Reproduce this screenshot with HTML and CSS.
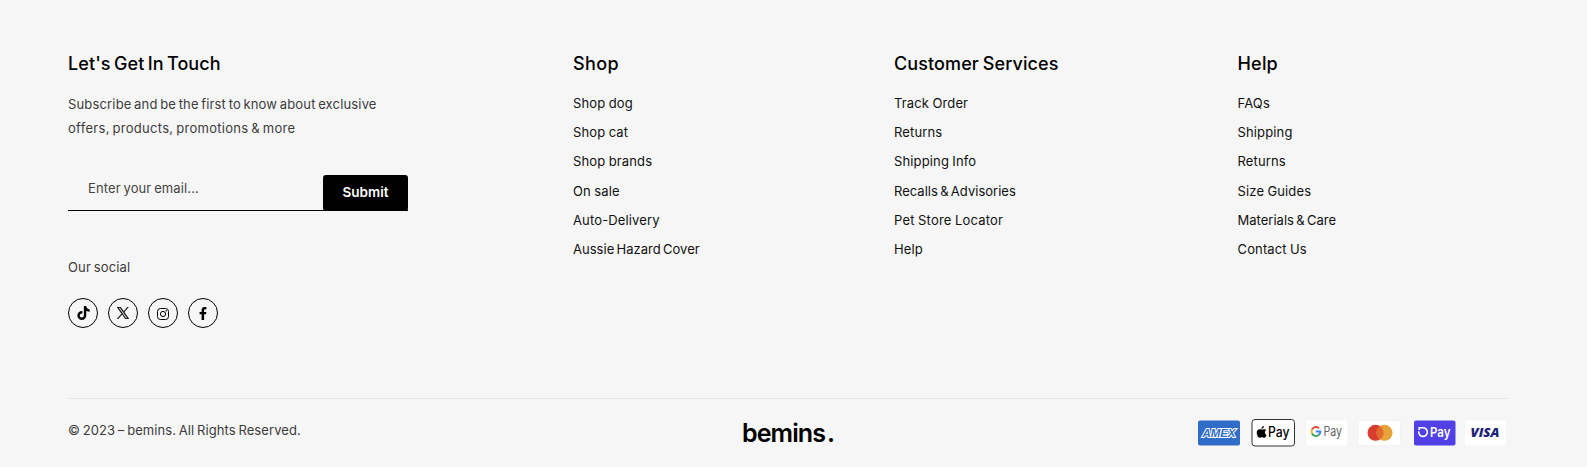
FILE: index.html
```html
<!DOCTYPE html>
<html lang="en">
<head>
<meta charset="utf-8">
<title>bemins.</title>
<link rel="stylesheet" href="styles.css">
</head>
<body>
<footer class="footer">
  <div class="columns">
    <section class="touch">
      <h2 class="title title-touch">Let's Get In Touch</h2>
      <p class="intro"><span class="intro-first">Subscribe and be the first to know about exclusive</span><br><span class="intro-second">offers, products, promotions &amp; more</span></p>
      <form class="subscribe">
        <input class="email" type="email" placeholder="Enter your email..." aria-label="Email">
        <button class="submit" type="button">Submit</button>
      </form>
      <p class="social-label">Our social</p>
      <div class="social">
        <a class="social-link"><svg width="13" height="14" viewBox="0 0 448 512"><path d="M448 209.900a210.100 210.100 0 0 1-122.800-39.300v178.800A162.600 162.600 0 1 1 185 188.300v89.900a74.600 74.600 0 1 0 52.200 71.200V0h88a121.200 121.200 0 0 0 1.900 22.200 122.200 122.200 0 0 0 53.900 80.200 121.400 121.400 0 0 0 67 20.100z"/></svg></a>
        <a class="social-link"><svg width="12" height="12" viewBox="0 0 24 24"><path stroke="#000" stroke-width=".7" d="M14.300 10.200 23.200 0h-2.100l-7.700 8.800L7.200 0H0l9.300 13.400L0 24h2.100l8.200-9.400L16.800 24H24zM11.400 13.300l-.9-1.300L2.900 1.600h3.200l6.100 8.700.9 1.300 8 11.300h-3.200z"/></svg></a>
        <a class="social-link"><svg width="12" height="12" viewBox="0 0 12 12" class="insta"><rect x=".5" y=".5" width="11" height="11" rx="3"/><circle cx="6" cy="6" r="2.600"/><circle cx="9.100" cy="2.900" r=".3"/></svg></a>
        <a class="social-link"><svg width="8" height="13" viewBox="0 0 320 512"><path d="m279 288 14-93h-89v-60c0-25 13-50 53-50h40V7s-37-7-72-7c-73 0-121 44-121 125v70H23v93h81v224h100V288z"/></svg></a>
      </div>
    </section>
    <nav class="shop">
      <h2 class="title title-shop">Shop</h2>
      <ul class="links"><li>Shop dog</li><li>Shop cat</li><li>Shop brands</li><li>On sale</li><li>Auto-Delivery</li><li class="tight">Aussie Hazard Cover</li></ul>
    </nav>
    <nav class="services">
      <h2 class="title title-services">Customer Services</h2>
      <ul class="links"><li>Track Order</li><li>Returns</li><li>Shipping Info</li><li class="tight">Recalls &amp; Advisories</li><li class="wide">Pet Store Locator</li><li>Help</li></ul>
    </nav>
    <nav class="help">
      <h2 class="title title-help">Help</h2>
      <ul class="links"><li>FAQs</li><li>Shipping</li><li>Returns</li><li>Size Guides</li><li class="tight">Materials &amp; Care</li><li>Contact Us</li></ul>
    </nav>
  </div>
  <div class="bottom">
    <p class="copyright">© 2023 – bemins. All Rights Reserved.</p>
    <div class="logo">bemins<span class="logo-dot">.</span></div>
    <svg class="payments" width="310" height="30" viewBox="0 0 310 30">
      <rect x="1" y="2.500" width="42" height="25" rx="2" fill="#2f6dc9"/>
      <text x="5.500" y="18.800" class="amex" textLength="33" lengthAdjust="spacingAndGlyphs">AMEX</text>
      <rect x="55" y="1.500" width="42.500" height="26.500" rx="3" fill="#fff" stroke="#333"/>
      <path d="M64.500 11.600c1 0 1.700-.7 3-.4.800.100 1.300.5 1.700 1.100-1.900 1.200-1.600 3.800.4 4.600-.5 1.400-1.500 2.900-2.600 2.900-.8 0-1.100-.5-2.200-.5s-1.400.5-2.100.5c-1.600 0-3-3-3-5.200 0-2.800 2.300-4 4.800-3zM64.500 11c-.1-1.600 1-2.700 2.400-2.900.1 1.500-1 2.800-2.400 2.900z"/>
      <text x="71" y="19.200" class="pay" textLength="21.500" lengthAdjust="spacingAndGlyphs">Pay</text>
      <rect x="109" y="2.500" width="41.500" height="25" rx="2" fill="#fff"/>
      <g fill="none" stroke-width="2"><path d="M115 11.500a4.400 4.400 0 0 1 7-1.200" stroke="#dc4537"/><path d="M115 11.500a4.500 4.500 0 0 0 0 4" stroke="#efb72e"/><path d="M115 15.500a4.400 4.400 0 0 0 6.900 1.300" stroke="#3aa757"/><path d="M121.900 16.800a4.400 4.400 0 0 0 1.500-3.300h-4.600" stroke="#4382e8"/></g>
      <text x="126.500" y="17.800" class="pay google" textLength="18.500" lengthAdjust="spacingAndGlyphs">Pay</text>
      <rect x="161" y="2.500" width="42.500" height="25" rx="2" fill="#fff" stroke="#eee" stroke-width=".7"/>
      <circle cx="178.500" cy="14.800" r="8" fill="#d83d2f"/><circle cx="187.500" cy="14.800" r="8" fill="#e8a23b"/><path d="M183 8.200a8 8 0 0 1 0 13.200 8 8 0 0 1 0-13.200z" fill="#e0692b"/>
      <rect x="217" y="2.500" width="41.500" height="25" rx="2" fill="#5140e6"/>
      <path d="M221.500 9.800h4.200a4.300 4.300 0 1 1-3.900 3.500M222.200 9v3" fill="none" stroke="#fff" stroke-width="1.600"/>
      <text x="233" y="18.500" class="pay shop-pay" textLength="20.500" lengthAdjust="spacingAndGlyphs">Pay</text>
      <rect x="268" y="2.500" width="41" height="25" rx="2" fill="#fff"/>
      <text x="273.500" y="19.200" class="visa" textLength="29" lengthAdjust="spacingAndGlyphs">VISA</text>
    </svg>
  </div>
</footer>
</body>
</html>
```
FILE: styles.css
```css
* { box-sizing: border-box; }
body { margin: 0; background: #f6f6f6; color: #000; font: 13px/24px Inter, "Liberation Sans", sans-serif; }
h2, p, ul { margin: 0; padding: 0; }
.footer { height: 467px; padding: 49px 79px 0 68px; overflow: hidden; }
.columns { display: grid; grid-template-columns: 505px 321px 343.500px 1fr; height: 349px; }
.title { font-size: 18px; line-height: 30px; font-weight: 500; white-space: nowrap; }
.title-touch { letter-spacing: .1px; word-spacing: -1.600px; }
.title-shop { letter-spacing: .4px; }
.title-services { letter-spacing: .1px; word-spacing: -1px; }
.title-help { letter-spacing: .2px; }
.intro { margin-top: 13px; color: #3c3c3c; white-space: nowrap; }
.intro-first { letter-spacing: .16px; word-spacing: -1.200px; }
.intro-second { letter-spacing: .3px; word-spacing: -1.200px; }
.subscribe { display: flex; width: 340px; height: 36px; margin-top: 35px; border-bottom: 1px solid #000; }
.email { flex: 1; min-width: 0; border: 0; background: none; padding: 0 20px 9px; font: inherit; letter-spacing: .12px; word-spacing: -1px; }
.email::placeholder { color: #444; opacity: 1; }
.submit { width: 85px; height: 36px; border: 0; border-radius: 3px; background: #000; color: #fff; font: 600 13.500px Inter, sans-serif; padding: 0 0 2px; }
.social-label { margin-top: 44px; color: #3c3c3c; letter-spacing: .15px; word-spacing: -1px; }
.social { display: flex; gap: 10px; margin-top: 19px; }
.social-link { display: flex; align-items: center; justify-content: center; width: 30px; height: 30px; border: 1px solid #000; border-radius: 50%; }
.insta { fill: none; stroke: #000; position: relative; top: 1px; }
.links { list-style: none; margin-top: 10px; line-height: 29.200px; white-space: nowrap; color: #111; letter-spacing: .14px; word-spacing: -.5px; }
.tight { letter-spacing: .02px; word-spacing: -1.400px; }
.wide { letter-spacing: .2px; }
.bottom { display: grid; grid-template-columns: 600px 1fr 311px; height: 69px; border-top: 1px solid #e6e6e6; }
.copyright { padding-top: 19px; color: #3c3c3c; letter-spacing: .08px; word-spacing: -1px; }
.logo { padding: 19px 0 0 74px; font-size: 25px; line-height: 30px; font-weight: 600; letter-spacing: -.9px; }
.logo-dot { margin-left: 2px; }
.payments { margin-top: 19px; }
.amex { font: italic 700 11.500px "Liberation Sans", sans-serif; fill: #2f6dc9; stroke: #fff; stroke-width: 2px; paint-order: stroke; }
.pay { font: 500 14px Inter, sans-serif; }
.google { fill: #5f6368; font-size: 13.500px; font-weight: 400; }
.shop-pay { fill: #fff; font-weight: 600; font-size: 13.500px; }
.visa { font: italic 800 13px "Open Sans", sans-serif; fill: #1b2378; }
```
